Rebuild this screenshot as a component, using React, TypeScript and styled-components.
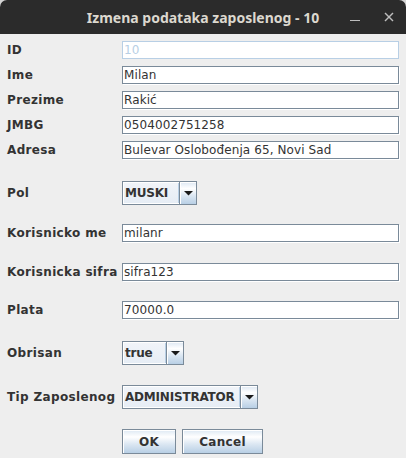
import React from "react";
import styled, { createGlobalStyle } from "styled-components";

const Global = createGlobalStyle`
  html, body { margin: 0; padding: 0; background: #d4d4d4; }
  body { width: 406px; height: 458px; overflow: hidden; }
`;

const Window = styled.div`
  width: 406px;
  height: 458px;
  display: flex;
  flex-direction: column;
  background: #eeeeee;
  border-radius: 7px 7px 0 0;
  overflow: hidden;
`;

const TitleBar = styled.div`
  height: 34px;
  flex: none;
  background: #2b2b2b;
  position: relative;
  display: flex;
  align-items: center;
  justify-content: center;
`;

const Title = styled.div`
  font-family: "Noto Sans", "DejaVu Sans", sans-serif;
  font-weight: 700;
  font-size: 14px;
  color: #dcd8cf;
  padding-left: 0px;
`;

const WinButtons = styled.div`
  position: absolute;
  right: 12px;
  top: 0;
  height: 34px;
  display: flex;
  align-items: center;
  gap: 24px;
`;

const Body = styled.div`
  padding: 7px 6px 0 7px;
  display: flex;
  flex-direction: column;
`;

const Row = styled.div<{ $top: number; $h: number }>`
  display: grid;
  grid-template-columns: 115px 1fr;
  align-items: center;
  height: ${(p) => p.$h}px;
  margin-top: ${(p) => p.$top}px;
`;

const Label = styled.div`
  font-family: "DejaVu Sans", sans-serif;
  font-weight: 700;
  font-size: 12px;
  letter-spacing: 0.35px;
  color: #333333;
  white-space: nowrap;
`;

const Field = styled.div<{ $disabled?: boolean }>`
  box-sizing: border-box;
  height: 18px;
  width: 277px;
  background: #ffffff;
  border: 1px solid ${(p) => (p.$disabled ? "#b8cfe5" : "#7a8a99")};
  box-shadow: ${(p) => (p.$disabled ? "none" : "1px 1px 0 #ffffff")};
  font-family: "DejaVu Sans", sans-serif;
  font-size: 12px;
  letter-spacing: 0.1px;
  line-height: 16px;
  padding-left: 1px;
  color: ${(p) => (p.$disabled ? "#b8cfe5" : "#333333")};
  white-space: nowrap;
  overflow: hidden;
`;

const Combo = styled.div<{ $w: number }>`
  box-sizing: border-box;
  width: ${(p) => p.$w}px;
  height: 24px;
  display: flex;
  border: 1px solid #7a8a99;
  background: #eeeeee;
`;

const ComboText = styled.div`
  flex: 1;
  box-sizing: border-box;
  border: 1px solid #ffffff;
  border-right: none;
  background: linear-gradient(#f0f4f9, #e6edf5);
  font-family: "DejaVu Sans", sans-serif;
  font-weight: 700;
  font-size: 12px;
  letter-spacing: -0.2px;
  line-height: 20px;
  padding-left: 1px;
  color: #333333;
  white-space: nowrap;
  overflow: hidden;
  box-shadow: inset -1px 0 0 #b8cfe5;
`;

const ComboArrow = styled.div`
  width: 17px;
  flex: none;
  box-sizing: border-box;
  border-left: 1px solid #7a8a99;
  box-shadow: inset 1px 1px 0 #ffffff;
  background: linear-gradient(#dde8f3 0%, #ffffff 30%, #dde8f3 60%, #b8cfe5 100%);
  display: flex;
  align-items: center;
  justify-content: center;
`;

const Buttons = styled.div`
  display: flex;
  gap: 6px;
  margin-top: 20px;
  padding-left: 115px;
`;

const Button = styled.button<{ $w: number }>`
  box-sizing: border-box;
  width: ${(p) => p.$w}px;
  height: 25px;
  border: 1px solid #7a8a99;
  box-shadow: inset 1px 1px 0 #ffffff;
  background: linear-gradient(#dde8f3 0%, #ffffff 30%, #dde8f3 60%, #b8cfe5 100%);
  font-family: "DejaVu Sans", sans-serif;
  font-weight: 700;
  font-size: 12px;
  letter-spacing: 0.3px;
  color: #333333;
  padding: 0;
  margin: 0;
`;

const Arrow = () => (
  <svg width="9" height="5" viewBox="0 0 9 5">
    <polygon points="0,0 9,0 4.5,4.5" fill="#1a1a1a" />
  </svg>
);

const TextRow = ({ label, value, top, disabled }: { label: string; value: string; top: number; disabled?: boolean }) => (
  <Row $top={top} $h={18}>
    <Label>{label}</Label>
    <Field $disabled={disabled}>{value}</Field>
  </Row>
);

const ComboRow = ({ label, value, top, w }: { label: string; value: string; top: number; w: number }) => (
  <Row $top={top} $h={24}>
    <Label>{label}</Label>
    <Combo $w={w}>
      <ComboText>{value}</ComboText>
      <ComboArrow>
        <Arrow />
      </ComboArrow>
    </Combo>
  </Row>
);

export default function App() {
  return (
    <>
      <Global />
      <Window>
        <TitleBar>
          <Title>Izmena podataka zaposlenog - 10</Title>
          <WinButtons>
            <svg width="10" height="10" viewBox="0 0 10 10">
              <line x1="0" y1="8.5" x2="10" y2="8.5" stroke="#bdbdbd" strokeWidth="1.2" />
            </svg>
            <svg width="10" height="10" viewBox="0 0 10 10">
              <line x1="1" y1="1" x2="9" y2="9" stroke="#bdbdbd" strokeWidth="1.4" />
              <line x1="9" y1="1" x2="1" y2="9" stroke="#bdbdbd" strokeWidth="1.4" />
            </svg>
          </WinButtons>
        </TitleBar>
        <Body>
          <TextRow label="ID" value="10" top={0} disabled />
          <TextRow label="Ime" value="Milan" top={7} />
          <TextRow label="Prezime" value="Rakić" top={7} />
          <TextRow label="JMBG" value="0504002751258" top={7} />
          <TextRow label="Adresa" value="Bulevar Oslobođenja 65, Novi Sad" top={7} />
          <ComboRow label="Pol" value="MUSKI" top={22} w={75} />
          <TextRow label="Korisnicko me" value="milanr" top={19} />
          <TextRow label="Korisnicka sifra" value="sifra123" top={21} />
          <TextRow label="Plata" value="70000.0" top={20} />
          <ComboRow label="Obrisan" value="true" top={22} w={62} />
          <ComboRow label="Tip Zaposlenog" value="ADMINISTRATOR" top={20} w={136} />
          <Buttons>
            <Button $w={54}>OK</Button>
            <Button $w={81}>Cancel</Button>
          </Buttons>
        </Body>
      </Window>
    </>
  );
}
